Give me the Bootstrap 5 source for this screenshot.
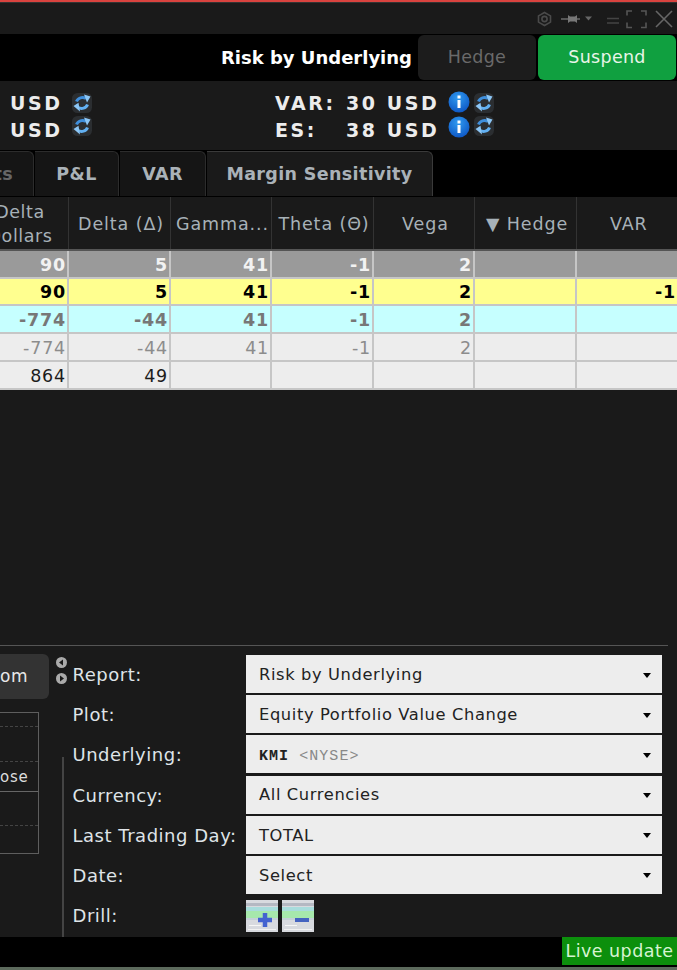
<!DOCTYPE html>
<html lang="en">
<head>
<meta charset="utf-8">
<title>Risk by Underlying</title>
<link rel="stylesheet" href="https://cdn.jsdelivr.net/npm/bootstrap@5.3.0/dist/css/bootstrap.min.css">
<style>
html,body{margin:0;height:970px;overflow:hidden;background:#1a1a1a}
body{font-family:"DejaVu Sans","Liberation Sans",sans-serif;color:#e6e6e6}
.shell{width:677px;height:970px;overflow:hidden;display:flex;flex-direction:column}
.redline{height:3px;background:#d9433f;border-bottom:1px solid #333;flex:none}
.titlebar{height:31px;flex:none;background:#1a1a1a;padding-right:3px}
.titlebar svg{display:block}
.headbar{height:47px;flex:none;background:#000;padding-right:1px}
.headbar h1{font-size:18px;font-weight:700;margin:0 6px 0 0;color:#fff;letter-spacing:0}
.hbtn{height:45px;font-size:17.5px;border-radius:6px;border:0;padding:0;letter-spacing:.3px}
.hbtn-hedge{width:118px;background:#1c1c1c;color:#6a6a6a;margin-right:2px}
.hbtn-hedge:disabled{background:#1c1c1c;color:#6a6a6a;opacity:1}
.hbtn-sus{width:138px;background:#10a040;color:#e8f5e8}
.summary{height:69px;flex:none;background:#1a1a1a;padding:9px 0 0 10px;font-weight:700;font-size:19px;letter-spacing:2.55px;color:#ececec;line-height:27px}
.sumleft{width:265px}
.sumright .lbl{display:inline-block;width:71px}
.ico{display:inline-block;vertical-align:-3px;letter-spacing:0}
.icogap{margin-left:4px}
.rowtwo .ico{position:relative;top:-2px}
.rowtwo .syncup{top:-4px}
.tabstrip{height:47px;flex:none;background:#000;padding-top:1px}
.tabitem{height:45px;border:1px solid #2c2c2c;border-bottom:0;border-left:0;border-radius:0 6px 0 0;margin-right:1px;color:#aab2b8;font-weight:700;font-size:17.5px;letter-spacing:.35px;display:flex;align-items:center;justify-content:center;background:#151515}
.tabcut{width:34px;color:#666;justify-content:flex-end;padding-right:20px;overflow:hidden}
.tabpl{width:84px}.tabvar{width:86px}.tabms{width:226px;background:#1a1a1a;border-color:#3a3a3a}
.gridwrap{flex:none}
.risk{table-layout:fixed;width:677px;margin:0;border-collapse:collapse;font-size:17.5px;letter-spacing:.8px;--bs-table-bg:transparent;--bs-table-color:inherit}
.risk th,.risk td{padding:1px 1px 0 0;border:0;border-right:2px solid #c6c6c6;border-bottom:2px solid #c6c6c6;text-align:right;overflow:hidden;white-space:nowrap;vertical-align:middle;line-height:24px;height:28px}
.risk .r-short td{height:27px}
.risk thead th{height:53px;background:#1a1a1a;color:#a7b1b8;font-weight:400;text-align:center;border-right:1px solid #333;border-bottom:2px solid #555;line-height:24px;padding:2px 0 0 4px;letter-spacing:.9px}
.risk th:last-child,.risk td:last-child{border-right:0}
.clip{display:block;white-space:normal;width:102px;margin-left:-35px;text-align:center;letter-spacing:.55px}
.r-total td{background:#9a9a9a;color:#f2f2f2;font-weight:700}
.r-yellow td{background:#ffff8f;color:#000;font-weight:700}
.r-cyan td{background:#c6ffff;color:#777;font-weight:700}
.r-gray td{background:#ededed;color:#8c8c8c}
.r-plain td{background:#ededed;color:#1c1c1c}
.spacer{flex:1 1 auto;min-height:0;background:#1a1a1a}
.rule{height:1px;flex:none;background:#555;margin:0 9px 0 0}
.controls{height:291px;flex:none;position:relative}
.leftpane{width:56px;flex:none;padding-top:8px}
.zoombtn{width:50px;height:45px;margin-left:-1px;background:#333;border-radius:0 6px 6px 0;font-size:17px;letter-spacing:.7px;color:#e8e8e8;display:flex;align-items:center;padding-left:1px}
.plotbox{width:39px;height:142px;margin-top:13px;border:1px solid #5e5e5e;border-left:0;display:flex;flex-direction:column;font-size:15px;letter-spacing:.7px;color:#ddd}
.plotbox div{flex:none;overflow:hidden;white-space:nowrap}
.dash1{height:14px;border-bottom:1px dashed #444}
.dash2{height:35px;border-bottom:1px dashed #444}
.oselab{height:30px;line-height:31px;border-bottom:1px solid #666}
.dash3{height:34px;border-bottom:1px dashed #444}
.arrowcol{width:13px;flex:none;padding-top:11px}
.arrowdot{display:block;width:11px;height:11px;margin-bottom:5px;border-radius:50%;background:#aaa}
.formgrid{flex:1 1 auto;padding:9px 15px 0 3px;position:relative}
.vline{position:absolute;left:-7px;top:111px;bottom:0;width:2px;background:#444}
.frow{height:40.2px;display:flex;align-items:flex-start}
.frow label{width:174px;flex:none;font-size:18px;letter-spacing:.52px;color:#dfe4e8;line-height:40px;margin:0;padding-left:.5px}
.picker{width:416px;height:38px;background:#ededed;border:0;border-radius:0;color:#222;font-size:16.3px;letter-spacing:.62px;padding:2px 11px 0 13px;display:flex;align-items:center;justify-content:space-between}
.picker:hover,.picker:active{background:#ededed;color:#222}
.picker::after{border-top-color:#000;border-width:5px 4.5px 0;margin:0;flex:none}
.mono{font-family:"Liberation Mono",monospace;font-size:15px;letter-spacing:1.05px;color:#222;font-weight:700;padding-top:3px}
.mono span{color:#888;font-weight:400}
.statusbar{height:30px;flex:none;background:#000;justify-content:flex-end;align-items:flex-start}
.live{width:115px;height:28px;background:#0c8f0c;color:#d6f4d2;font-size:17.5px;letter-spacing:.45px;line-height:29px;text-align:center;white-space:nowrap}
.foot{height:3px;flex:none;background:#5c6a5c}
.defs{position:absolute;width:0;height:0}
</style>
</head>
<body>
<div class="shell">
<div class="redline"></div>
<div class="titlebar d-flex justify-content-end align-items-center">
<svg width="140" height="24" viewBox="0 0 140 24" fill="none" stroke="#4a4a4a" stroke-width="1.6">
<path d="M10.500 5.500l6 3.400v6.200l-6 3.400-6-3.400V8.900z"/><circle cx="10.500" cy="12" r="2.600"/>
<path d="M27 12h7" stroke="#666"/><path d="M34 8l2 1.500h5l2-1.500v8l-2-1.500h-5l-2 1.500z" fill="#777" stroke="none"/><path d="M43 12h3" stroke="#666"/>
<path d="M51 9.500h7l-3.500 4z" fill="#666" stroke="none"/>
<path d="M73 11.500h12M73 16h12" stroke="#444"/>
<path d="M93 10V5.500h5M107 5.500h5V10M112 17v5h-5M98 22h-5v-5" stroke="#555" transform="translate(0 -1.500)"/>
<path d="M122 4l16 16M138 4l-16 16" stroke="#666"/>
</svg>
</div>
<div class="headbar d-flex justify-content-end align-items-center">
<h1>Risk by Underlying</h1>
<button class="btn hbtn hbtn-hedge" disabled>Hedge</button>
<button class="btn hbtn hbtn-sus">Suspend</button>
</div>
<div class="summary d-flex">
<div class="sumleft">
<div>USD <svg class="ico" width="20" height="20" viewBox="0 0 20 20"><use href="#sync"/></svg></div>
<div class="rowtwo">USD <svg class="ico syncup" width="20" height="20" viewBox="0 0 20 20"><use href="#sync"/></svg></div>
</div>
<div class="sumright">
<div><span class="lbl">VAR:</span>30 USD <svg class="ico" width="22" height="22" viewBox="0 0 22 22"><use href="#info"/></svg><svg class="ico icogap" width="20" height="20" viewBox="0 0 20 20"><use href="#sync"/></svg></div>
<div class="rowtwo"><span class="lbl">ES:</span>38 USD <svg class="ico" width="22" height="22" viewBox="0 0 22 22"><use href="#info"/></svg><svg class="ico icogap syncup" width="20" height="20" viewBox="0 0 20 20"><use href="#sync"/></svg></div>
</div>
</div>
<div class="tabstrip d-flex">
<div class="tabitem tabcut">ts</div>
<div class="tabitem tabpl">P&amp;L</div>
<div class="tabitem tabvar">VAR</div>
<div class="tabitem tabms">Margin Sensitivity</div>
</div>
<div class="gridwrap">
<table class="table risk">
<colgroup><col style="width:68px"><col style="width:102px"><col style="width:101px"><col style="width:102px"><col style="width:101px"><col style="width:102px"><col></colgroup>
<thead><tr><th><span class="clip">Delta Dollars</span></th><th>Delta (Δ)</th><th>Gamma...</th><th>Theta (Θ)</th><th>Vega</th><th>▼ Hedge</th><th>VAR</th></tr></thead>
<tbody>
<tr class="r-total"><td>90</td><td>5</td><td>41</td><td>-1</td><td>2</td><td></td><td></td></tr>
<tr class="r-yellow r-short"><td>90</td><td>5</td><td>41</td><td>-1</td><td>2</td><td></td><td>-1</td></tr>
<tr class="r-cyan"><td>-774</td><td>-44</td><td>41</td><td>-1</td><td>2</td><td></td><td></td></tr>
<tr class="r-gray"><td>-774</td><td>-44</td><td>41</td><td>-1</td><td>2</td><td></td><td></td></tr>
<tr class="r-plain"><td>864</td><td>49</td><td></td><td></td><td></td><td></td><td></td></tr>
</tbody>
</table>
</div>
<div class="spacer"></div>
<div class="rule"></div>
<div class="controls d-flex">
<div class="leftpane">
<div class="zoombtn">om</div>
<div class="plotbox"><div class="dash1"></div><div class="dash2"></div><div class="oselab">ose</div><div class="dash3"></div></div>
</div>
<div class="arrowcol">
<svg class="arrowdot" viewBox="0 0 11 11"><path d="M7 2.500v6L3 5.500z" fill="#1a1a1a"/></svg>
<svg class="arrowdot" viewBox="0 0 11 11"><path d="M4 2.500v6l4-3z" fill="#1a1a1a"/></svg>
</div>
<div class="formgrid">
<div class="vline"></div>
<div class="frow"><label>Report:</label><button class="btn picker dropdown-toggle">Risk by Underlying</button></div>
<div class="frow"><label>Plot:</label><button class="btn picker dropdown-toggle">Equity Portfolio Value Change</button></div>
<div class="frow"><label>Underlying:</label><button class="btn picker dropdown-toggle"><span class="mono">KMI <span>&lt;NYSE&gt;</span></span></button></div>
<div class="frow"><label>Currency:</label><button class="btn picker dropdown-toggle">All Currencies</button></div>
<div class="frow"><label>Last Trading Day:</label><button class="btn picker dropdown-toggle">TOTAL</button></div>
<div class="frow"><label>Date:</label><button class="btn picker dropdown-toggle">Select</button></div>
<div class="frow"><label>Drill:</label><div class="d-flex gap-1 pt-1">
<svg width="32" height="32" viewBox="0 0 32 32"><use href="#drill"/><path d="M19 13v14M12 20h14" stroke="#4463d0" stroke-width="4.500"/></svg>
<svg width="32" height="32" viewBox="0 0 32 32"><use href="#drill"/><path d="M13 20h14" stroke="#4463c0" stroke-width="4"/></svg>
</div></div>
</div>
</div>
<div class="statusbar d-flex"><div class="live">Live update</div></div>
<div class="foot"></div>
</div>
<svg class="defs">
<defs>
<radialGradient id="bl" cx=".45" cy=".3" r=".8"><stop offset="0" stop-color="#2f9bf0"/><stop offset="1" stop-color="#0a4fc0"/></radialGradient>
<g id="sync"><rect width="20" height="20" rx="5.500" fill="#2b2e31"/>
<path d="M4.500 8.500C6 4.500 10.500 3.800 14 5.500" fill="none" stroke="#3f8fdc" stroke-width="3"/><path d="M12 1.500L18.500 3.500 15 9.500z" fill="#8cc6f5"/>
<path d="M15.500 11.500C14 15.500 9.500 16.200 6 14.500" fill="none" stroke="#62b0f2" stroke-width="3"/><path d="M8 18.500L1.500 13 6.500 9.800z" fill="#8cc6f5"/></g>
<g id="info"><circle cx="11" cy="11" r="10.500" fill="url(#bl)"/><rect x="9.500" y="9" width="3" height="8" fill="#fff"/><rect x="9.500" y="4.500" width="3" height="3" fill="#fff"/></g>
<g id="drill"><rect width="32" height="32" fill="#d8dadf"/><rect y="3" width="32" height="3" fill="#b4b8c2"/><rect y="7" width="32" height="4" fill="#a8dcdc"/><rect y="11" width="32" height="7" fill="#a6e8ac"/><rect y="18" width="32" height="2" fill="#c4d0d8"/><rect x="3" y="25" width="12" height="1" fill="#f6f6f6"/><rect x="2" y="29" width="28" height="1" fill="#f2f2f2"/></g>
</defs>
</svg>
</body>
</html>
